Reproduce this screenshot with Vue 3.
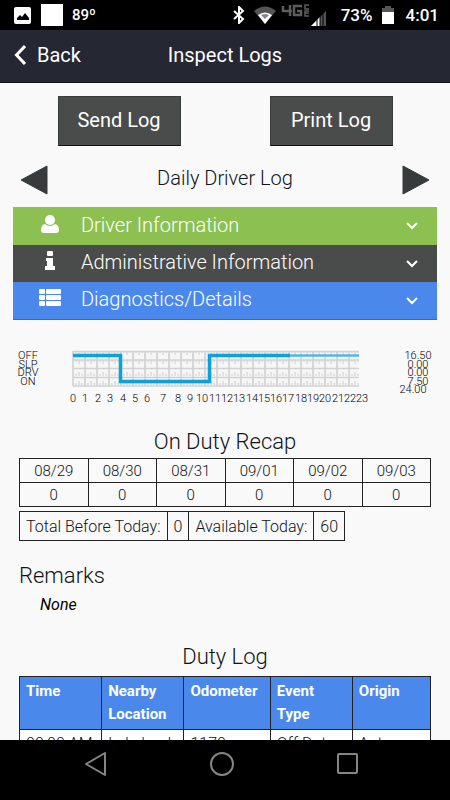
<script setup>
const panels = [
  { label: 'Driver Information', kind: 'driver' },
  { label: 'Administrative Information', kind: 'admin' },
  { label: 'Diagnostics/Details', kind: 'details' }
]

const gridLeft = 73
const hourWidth = 12
const rowTops = [4, 13, 21, 30]
const hours = Array.from({ length: 24 }, (_, i) => i)
const statuses = ['OFF', 'SLP', 'DRV', 'ON']
const totals = ['16.50', '0.00', '0.00', '7.50']
const labelBaselines = [12, 21, 29, 38]

const hourX = (h) => {
  if (h < 7) return 73 + Math.round(h * 12.4)
  if (h < 9) return 163 + (h - 7) * 15
  return 190 + Math.round((h - 9) * 12.3)
}

// Quarter-hour tick marks for every cell of the log grid.
const ticks = []
rowTops.forEach((top, row) => {
  hours.forEach((h) => {
    for (let q = 1; q < 4; q++) {
      const x = gridLeft + h * hourWidth + q * 3
      const len = q === 2 ? 4 : 2
      ticks.push(row < 2 ? `M${x} ${top}v${len}` : `M${x} ${top + 8}v-${len}`)
    }
  })
})
const tickPath = ticks.join('')
const columnPath = hours.map((h) => `M${gridLeft + h * hourWidth} 4v35`).join('')

const recapDays = ['08/29', '08/30', '08/31', '09/01', '09/02', '09/03']
const recapHours = [0, 0, 0, 0, 0, 0]
const dutyColumns = ['Time', 'Nearby Location', 'Odometer', 'Event Type', 'Origin']
const dutyRows = [['00:00 AM', 'Lakeland', '1170', 'Off Dut', 'Auto']]
</script>

<template>
  <div class="screen">
    <div class="status">
      <div class="status-side">
        <svg class="pic" width="17" height="17" viewBox="0 0 17 17">
          <rect width="17" height="17" rx="2" fill="#fff" />
          <path d="M3 13v-2l3-3 2 2 3-4 4 5v2z" fill="#000" />
        </svg>
        <span class="square"></span>
        <span class="temp">89º</span>
      </div>
      <div class="status-side">
        <svg width="12" height="18" viewBox="0 0 12 18" fill="none" stroke="#fff" stroke-width="2">
          <path d="M1 5l9 8-4 4V1l4 4-9 8" />
        </svg>
        <svg class="wifi" width="22" height="18" viewBox="0 0 22 18">
          <path d="M0 5Q11-4 22 5L11 18z" fill="#555" />
          <path d="M4 9Q11 4 18 9L11 18z" fill="#fff" />
          <path d="M7 9Q11 7 15 9L11 13z" fill="#888" />
        </svg>
        <svg class="cell" width="46" height="24" viewBox="0 0 46 24">
          <g fill="none" stroke="#5c5c5c" stroke-width="2.5">
            <path d="M2 3v5h9M9 2v11M21 3h-8v9h7V8h-4" />
            <path d="M28 2h-4v4h4M28 8h-4v5h4M24 10h4" stroke-width="1.5" />
          </g>
          <path d="M30 23L45 8v15z" fill="#555" />
          <path d="M30 23l9-9v9z" fill="#fff" />
          <path d="M36 14v9M39 11v12M42 8v15" stroke="#000" stroke-width="1" />
        </svg>
        <span class="percent">73%</span>
        <svg class="battery" width="12" height="19" viewBox="0 0 12 19">
          <path d="M3 0h6v2h3v4H0V2h3z" fill="#555" />
          <path d="M0 6h12v12H0z" fill="#fff" />
        </svg>
        <span class="clock">4:01</span>
      </div>
    </div>

    <header class="header">
      <button class="back" type="button">
        <svg width="12" height="20" viewBox="0 0 12 20" fill="none" stroke="#fff" stroke-width="3">
          <path d="M11 1l-8.500 9 8.500 9" />
        </svg>
        <span>Back</span>
      </button>
      <h1 class="title">Inspect Logs</h1>
    </header>

    <main class="content">
      <div class="actions">
        <button class="action" type="button">Send Log</button>
        <button class="action" type="button">Print Log</button>
      </div>

      <div class="pager">
        <button class="arrow" type="button" aria-label="Previous day">
          <svg width="28" height="30" viewBox="0 0 28 30"><path d="M1 15L27 1v28z" fill="#373b3b" stroke="#373b3b" stroke-linejoin="round" /></svg>
        </button>
        <h2 class="pager-title">Daily Driver Log</h2>
        <button class="arrow" type="button" aria-label="Next day">
          <svg width="28" height="30" viewBox="0 0 28 30"><path d="M27 15L1 1v28z" fill="#373b3b" stroke="#373b3b" stroke-linejoin="round" /></svg>
        </button>
      </div>

      <div class="panels">
        <button v-for="p in panels" :key="p.kind" class="panel" :class="p.kind" type="button">
          <span class="panel-icon">
            <svg v-if="p.kind === 'driver'" width="18" height="20" viewBox="0 0 18 20" fill="#fff">
              <circle cx="9" cy="6" r="5" />
              <path d="M4 10Q9 14 14 10q4 1 4 6 0 3-3 3H3q-3 0-3-3 0-5 4-6z" />
            </svg>
            <svg v-else-if="p.kind === 'admin'" width="10" height="20" viewBox="0 0 10 20" fill="#fff">
              <rect x="2" y="0" width="6" height="5" rx="1" />
              <path d="M1 7h7v8h2v4H0v-4h2v-5H1z" />
            </svg>
            <svg v-else width="22" height="20" viewBox="0 0 22 20" fill="#fff">
              <rect x="0" y="1" width="6" height="5" rx="1" /><rect x="7" y="1" width="15" height="5" rx="1" />
              <rect x="0" y="7" width="6" height="5" rx="1" /><rect x="7" y="7" width="15" height="5" rx="1" />
              <rect x="0" y="13" width="6" height="5" rx="1" /><rect x="7" y="13" width="15" height="5" rx="1" />
            </svg>
          </span>
          <span class="panel-label">{{ p.label }}</span>
          <svg class="chevron" width="12" height="8" viewBox="0 0 12 8" fill="none" stroke="#fff" stroke-width="2">
            <path d="M1 1l5 5 5-5" />
          </svg>
        </button>
      </div>

      <svg class="chart" viewBox="0 0 450 60" role="img" aria-label="Duty status by hour">
        <rect x="73" y="4" width="286" height="35" fill="#f6f6f6" />
        <path :d="tickPath" stroke="#cccccc" stroke-width="1" />
        <path :d="columnPath" stroke="#cdcdcd" stroke-width="1.500" />
        <path d="M73 4.500h286M73 13h286M73 21.500h286M73 30.500h286M73 39h286" stroke="#d2d2d2" stroke-width="1.500" />
        <path d="M73 8.500h47.500v26h89V8.500H290" fill="none" stroke="#0aa1dc" stroke-width="3.500" />
        <path d="M290 8.500h69" stroke="#4cb9e4" stroke-width="2.500" />
        <text v-for="(s, i) in statuses" :key="s" x="28" :y="labelBaselines[i]" class="axis">{{ s }}</text>
        <text v-for="(t, i) in totals" :key="i" x="418" :y="labelBaselines[i]" class="axis">{{ t }}</text>
        <text x="413" y="46" class="axis">24.00</text>
        <text v-for="h in hours" :key="'h' + h" :x="hourX(h)" y="55" class="axis">{{ h }}</text>
      </svg>

      <h2 class="section-title recap-title">On Duty Recap</h2>
      <table class="recap">
        <thead>
          <tr><th v-for="d in recapDays" :key="d" scope="col">{{ d }}</th></tr>
        </thead>
        <tbody>
          <tr><td v-for="(n, i) in recapHours" :key="i">{{ n }}</td></tr>
        </tbody>
      </table>
      <table class="totals">
        <tbody>
          <tr>
            <th scope="row">Total Before Today:</th>
            <td>0</td>
            <th scope="row">Available Today:</th>
            <td>60</td>
          </tr>
        </tbody>
      </table>

      <h2 class="section-title remarks-title">Remarks</h2>
      <p class="remark">None</p>

      <h2 class="section-title duty-title">Duty Log</h2>
      <table class="duty">
        <colgroup>
          <col class="col-mid" /><col class="col-mid" /><col class="col-wide" /><col class="col-mid" /><col />
        </colgroup>
        <thead>
          <tr><th v-for="c in dutyColumns" :key="c" scope="col">{{ c }}</th></tr>
        </thead>
        <tbody>
          <tr v-for="(r, i) in dutyRows" :key="i"><td v-for="(c, j) in r" :key="j">{{ c }}</td></tr>
        </tbody>
      </table>
    </main>

    <nav class="navbar">
      <button type="button" aria-label="Back">
        <svg width="24" height="26" viewBox="0 0 24 26" fill="none" stroke="#858585" stroke-width="2"><path d="M2 13L21 2v22z" stroke-linejoin="round" /></svg>
      </button>
      <button type="button" aria-label="Home">
        <svg width="24" height="26" viewBox="0 0 24 26" fill="none" stroke="#858585" stroke-width="2"><circle cx="12" cy="13" r="11" /></svg>
      </button>
      <button type="button" aria-label="Recent apps">
        <svg width="24" height="26" viewBox="0 0 24 26" fill="none" stroke="#858585" stroke-width="2"><rect x="2" y="3" width="19" height="19" rx="1" /></svg>
      </button>
    </nav>
  </div>
</template>

<style>
body {
  margin: 0;
  background: #f9f9f9;
}
</style>

<style scoped>
.screen {
  display: flex;
  flex-direction: column;
  height: 100vh;
  font-family: Roboto, "Liberation Sans", sans-serif;
  color: #101414;
  background: #f9f9f9;
}
button {
  border: 0;
  padding: 0;
  background: none;
  font-family: inherit;
  color: #fff;
}
svg {
  display: block;
  flex: none;
}
h1,
h2,
p {
  margin: 0;
  font-weight: 400;
}
.status {
  flex: none;
  display: flex;
  justify-content: space-between;
  height: 30px;
  padding: 0 11px 0 14px;
  background: #000;
  color: #fff;
}
.status-side {
  display: flex;
  align-items: center;
}
.square {
  width: 22px;
  height: 22px;
  margin: 0 9px 0 10px;
  background: #fff;
}
.temp {
  font-size: 15px;
  font-weight: 500;
}
.wifi {
  margin-left: 9px;
}
.cell {
  margin-left: 5px;
}
.percent {
  margin-left: 14px;
  font-size: 18px;
  font-weight: 500;
}
.battery {
  margin-left: 9px;
}
.clock {
  margin-left: 12px;
  font-size: 18px;
  font-weight: 500;
}
.percent,
.clock {
  font-size: 17px;
}
.header {
  flex: none;
  display: grid;
  grid-template-columns: 1fr auto 1fr;
  align-items: center;
  height: 50px;
  padding: 0 14px 2px;
  background: #252732;
  border-bottom: 1px solid #0a0e20;
  color: #fff;
}
.back {
  display: flex;
  align-items: center;
  gap: 11px;
  font-size: 20px;
}
.title {
  font-size: 20px;
}
.content {
  flex: 1;
  min-height: 0;
  overflow: hidden;
}
.actions {
  display: grid;
  grid-template-columns: 1fr 1fr;
  justify-items: center;
  padding: 13px 13px 0;
}
.action {
  width: 123px;
  height: 50px;
  padding-bottom: 2px;
  border: 1px solid #3b3d3c;
  border-bottom-color: #101010;
  background: #4a4c4b;
  font-size: 20px;
}
.pager {
  display: flex;
  align-items: center;
  justify-content: space-between;
  padding: 19px 20px 0;
}
.pager-title {
  padding-bottom: 5px;
  font-size: 20px;
  font-weight: 350;
  line-height: 24px;
}
.panels {
  margin: 12px 13px 0;
}
.panel {
  display: flex;
  align-items: center;
  width: 100%;
  height: 38px;
  padding: 0 19px 0 22px;
  font-size: 20px;
  font-weight: 350;
  text-align: left;
}
.panel.admin {
  height: 37px;
}
.driver {
  background: #8cc152;
}
.admin {
  background: #4a4c4b;
}
.details {
  background: #4a89eb;
  border-bottom: 1px solid #1f6fd8;
}
.panel-icon {
  display: flex;
  justify-content: center;
  width: 30px;
  margin-right: 16px;
  padding-bottom: 5px;
}
.panel-label {
  flex: 1;
  padding-bottom: 3px;
}
.chart {
  width: 100%;
  margin-top: 27px;
}
.axis {
  font-size: 11px;
  font-weight: 350;
  text-anchor: middle;
  fill: #000;
}
.section-title {
  font-size: 22px;
  font-weight: 350;
  line-height: 26px;
  text-align: center;
}
.recap-title {
  margin-top: 22px;
}
table {
  border-collapse: collapse;
}
th,
td {
  border: 1px solid #222;
  font-size: 16px;
  font-weight: 350;
}
.recap,
.duty {
  width: calc(100% - 38px);
  margin: 3px 19px 0;
  table-layout: fixed;
}
.recap th,
.recap td {
  height: 23px;
  padding: 0;
  text-align: center;
  font-size: 15px;
}
.totals {
  margin: 4px 19px 0;
}
.totals th,
.totals td {
  height: 28px;
  padding: 0 6px;
  font-weight: 300;
}
.remarks-title {
  margin: 22px 19px 0;
  text-align: left;
}
.remark {
  margin: 5px 40px 0;
  font-size: 16px;
  line-height: 22px;
  font-style: italic;
  color: #000;
}
.duty-title {
  margin-top: 28px;
}
.duty {
  margin-top: 6px;
  background: #fff;
}
.col-mid {
  width: 20%;
}
.col-wide {
  width: 21%;
}
.duty th,
.duty td {
  padding: 3px 6px;
  text-align: left;
  vertical-align: top;
  font-size: 15px;
  line-height: 23px;
}
.duty td {
  padding-top: 2px;
  font-size: 16px;
  white-space: nowrap;
}
.duty th {
  background: #4a89eb;
  color: #fff;
  font-weight: 700;
}
.navbar {
  flex: none;
  display: grid;
  grid-template-columns: 126px 126px 126px;
  justify-content: center;
  height: 60px;
  padding-right: 6px;
  padding-bottom: 13px;
  box-sizing: border-box;
  background: #000;
}
.navbar button {
  display: flex;
  align-items: center;
  justify-content: center;
}
</style>
